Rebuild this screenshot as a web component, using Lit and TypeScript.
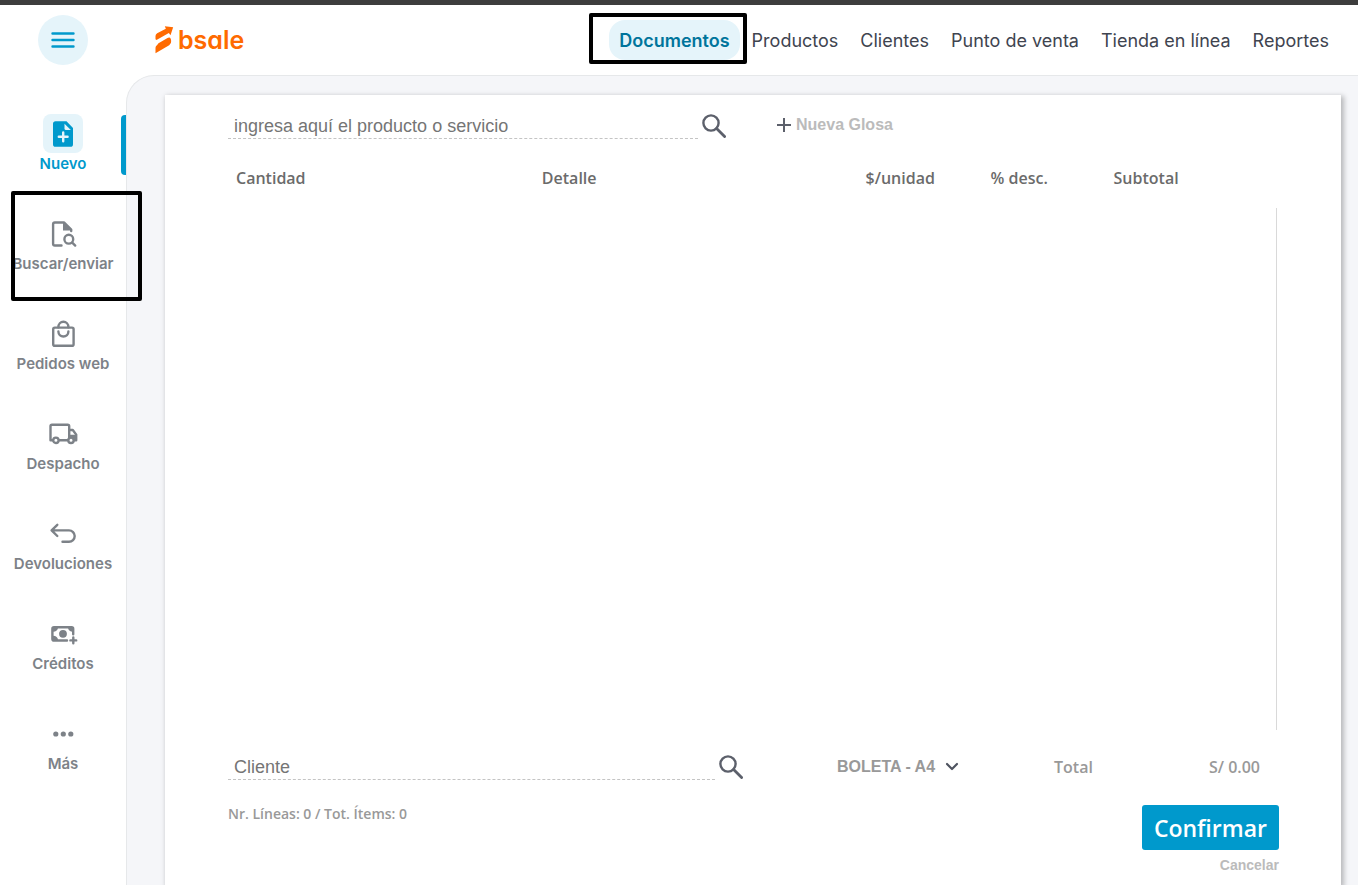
import { LitElement, html, css, svg, nothing } from "lit";
import { customElement, state } from "lit/decorators.js";

const icons: Record<string, unknown> = {
  nuevo: svg`
    <path fill="currentColor" d="M8 2.2h10.5L25 9v16.2a2.6 2.6 0 0 1-2.6 2.6H7.6A2.6 2.6 0 0 1 5 25.2V5a2.8 2.8 0 0 1 3-2.8z"/>
    <path class="cut" d="M16.5 4.8v4.7a1.500 1.500 0 0 0 1.500 1.500h4.800z"/>
    <path class="cut-line" d="M15.200 13.400v8.800M10.800 17.800h8.800"/>`,
  buscar: svg`
    <path class="line" d="M13.500 26.500H6.800a1.700 1.700 0 0 1-1.700-1.700V5.200a1.700 1.700 0 0 1 1.700-1.700h9.400l7 7v1.600"/>
    <path fill="currentColor" d="M15 3v8.500h8.600z"/>
    <circle class="line" cx="20.800" cy="20.200" r="4.400"/>
    <path class="line" d="M24.200 23.600l3 3"/>`,
  pedidos: svg`
    <rect class="line" x="5.200" y="8.600" width="20.400" height="18.200" rx="1.600"/>
    <path class="line" d="M10.400 8.200a5 5.400 0 0 1 10 0M10.400 12.500a5 5 0 0 0 10 0"/>`,
  despacho: svg`
    <path class="line" d="M4.400 21.200H2.500V7.200a1.500 1.500 0 0 1 1.500-1.500h15.700a1.500 1.500 0 0 1 1.500 1.500v13M11.500 21.200h8M21.200 11h3.600l3.400 4.600v5.600h-1.600"/>
    <path fill="currentColor" d="M21 15.800h8V21l-2 .5-4-3-2 .5z"/>
    <circle class="line hollow" cx="7.900" cy="21.300" r="2.700"/>
    <circle class="line hollow" cx="23" cy="21.300" r="2.700"/>`,
  devoluciones: svg`
    <path class="line" d="M9.300 5.800L3.600 11.400l5.700 5.600M4 11.400h17a5.700 5.700 0 0 1 0 11.400h-6.500"/>`,
  creditos: svg`
    <path class="line" d="M19 21.500H6a1.600 1.600 0 0 1-1.600-1.600V9.800A1.600 1.600 0 0 1 6 8.200h17.600a1.600 1.600 0 0 1 1.600 1.600v5.400"/>
    <path fill="currentColor" d="M5 8.500h5c0 2.600-2 4.200-5 4.200zM20 8.500h5v4.200c-3 0-5-1.600-5-4.200zM5 16.800c3 0 5 1.700 5 4.400H5z"/>
    <circle fill="currentColor" cx="15" cy="14.800" r="3.900"/>
    <path class="line" d="M25.300 18.500v5.800M22.400 21.400h5.800"/>`,
  mas: svg`
    <g fill="currentColor"><circle cx="7.800" cy="15" r="2.600"/><circle cx="15.300" cy="15" r="2.600"/><circle cx="22.800" cy="15" r="2.600"/></g>`,
};

const sideItems = [
  { id: "nuevo", label: "Nuevo" },
  { id: "buscar", label: "Buscar/enviar", marked: true },
  { id: "pedidos", label: "Pedidos web" },
  { id: "despacho", label: "Despacho" },
  { id: "devoluciones", label: "Devoluciones" },
  { id: "creditos", label: "Créditos" },
  { id: "mas", label: "Más" },
];

const sections = ["Documentos", "Productos", "Clientes", "Punto de venta", "Tienda en línea", "Reportes"];

const magnifier = html`<svg width="24" height="24" viewBox="0 0 24 24" aria-hidden="true">
  <circle cx="9" cy="9" r="7.600" fill="none" stroke="currentColor" stroke-width="2.400"/>
  <path d="M14.600 14.600l8 8" fill="none" stroke="currentColor" stroke-width="2.800" stroke-linecap="round"/>
</svg>`;

@customElement("app-root")
export class AppRoot extends LitElement {
  @state() private section = "Documentos";
  @state() private current = "nuevo";

  static styles = css`
    :host {
      display: flex;
      flex-direction: column;
      min-height: 100vh;
      background: #fff;
      font-family: Inter, sans-serif;
      color: #7d8288;
    }
    * { box-sizing: border-box; }
    svg { display: block; flex: none; }
    button, input, select { font: inherit; color: inherit; border: 0; background: none; padding: 0; margin: 0; cursor: pointer; }
    a { color: inherit; text-decoration: none; }

    .strip { height: 5px; background: #3d3d3d; }
    .header { display: flex; align-items: center; height: 70px; padding-right: 19px; }
    .menu-slot { width: 126px; display: flex; justify-content: center; flex: none; }
    .menu { width: 50px; height: 50px; border-radius: 50%; background: #e5f4fa; color: #0099cc; display: grid; place-items: center; }
    .brand { display: flex; align-items: center; gap: 4px; padding-left: 29px; color: #ff6a00; font-size: 25px; line-height: 28px; font-weight: 600; font-feature-settings: "cv11"; }
    .sections { display: flex; gap: 2px; margin-left: auto; font-size: 18px; line-height: 38px; color: #40444f; white-space: nowrap; }
    .section { display: block; padding: 2px 10px 0; border-radius: 16px; }
    .section.on { background: #e5f4fa; color: #00759c; font-weight: 600; }
    .marked { position: relative; }
    .frame { position: absolute; border: 4px solid #000; border-radius: 2px; pointer-events: none; z-index: 2; }
    .frame-section { inset: -7px -7px -4px -20px; }
    .frame-item { inset: -24px -16px -26px 11px; }

    .body { flex: 1; display: flex; }
    .side { width: 126px; flex: none; display: flex; flex-direction: column; gap: 40px; padding: 40px 0; }
    .item-wrap { position: relative; }
    .item-wrap.on { box-shadow: none; }
    .item-wrap.on::after { content: ""; position: absolute; top: 0; right: 0; width: 5px; height: 60px; background: #0099cc; border-radius: 4px 0 0 4px; }
    .item { display: flex; flex-direction: column; align-items: center; height: 60px; font-size: 15px; line-height: 22px; font-weight: 600; white-space: nowrap; }
    .item-icon { width: 40px; height: 40px; margin-top: -1px; border-radius: 8px; display: grid; place-items: center; }
    .item.on { color: #0099cc; }
    .item.on .item-icon { background: #e5f4fa; }
    .line { fill: none; stroke: currentColor; stroke-width: 2.4; stroke-linecap: round; stroke-linejoin: round; }
    .hollow { fill: #fff; }
    .cut { fill: #e5f4fa; }
    .cut-line { fill: none; stroke: #e5f4fa; stroke-width: 2.4; stroke-linecap: round; }

    .main { flex: 1; min-width: 0; display: flex; background: #f5f6f9; border: 1px solid #e6e8ea; border-width: 1px 0 0 1px; border-top-left-radius: 28px; padding: 19px 17px 0 38px; overflow: hidden; }
    .card { flex: 1; min-width: 0; display: flex; flex-direction: column; background: #fff; box-shadow: 2px 2px 5px 1px rgba(0, 0, 0, 0.25); padding: 18px 62px 12px 63px; font-family: "Open Sans", sans-serif; font-weight: 600; }

    .entry { display: grid; grid-template-columns: 498fr 503fr; gap: 50px; align-items: start; }
    .lookup { display: flex; gap: 4px; align-items: flex-start; color: #5c606b; }
    .lookup input { flex: 1; min-width: 0; height: 26px; border-bottom: 1px dashed #c4c4c4; padding: 2px 6px 0; font: 18px/22px "Liberation Sans", Arial, sans-serif; color: #555; outline: none; cursor: text; }
    .lookup input::placeholder { color: #757575; opacity: 1; }
    .lookup svg { margin-top: 1px; }
    .gloss { justify-self: start; display: flex; align-items: center; gap: 4px; font: bold 16px/24px "Liberation Sans", Arial, sans-serif; color: #bbb; }
    .gloss svg { color: #5c606b; }

    .lines { width: 100%; border-collapse: collapse; table-layout: fixed; margin-top: 25px; font-size: 16px; line-height: 28px; color: #6b6b6b; }
    .lines th { text-align: left; font-weight: 600; padding: 0 0 0 8px; white-space: nowrap; }
    .c1 { width: 29.1%; }
    .c2 { width: 30.8%; }
    .c3 { width: 11.9%; }
    .c4 { width: 11.7%; }
    .rows { flex: 1; min-height: 200px; margin: 16px 2px 24px 0; border-right: 1px solid #d9d9d9; }

    .summary { display: grid; grid-template-columns: 609fr 217fr 225fr; align-items: start; font-size: 16px; line-height: 26px; color: #999; }
    .summary .lookup { margin-right: 94px; }
    .kind { display: grid; justify-self: start; align-items: center; }
    .kind select, .kind svg { grid-area: 1 / 1; }
    .kind select { appearance: none; padding-right: 22px; font: bold 16px/26px "Liberation Sans", Arial, sans-serif; color: #999; }
    .kind svg { justify-self: end; color: #4f5460; pointer-events: none; }
    .total { display: flex; justify-content: space-between; padding-right: 19px; white-space: nowrap; }

    .foot { display: flex; justify-content: space-between; align-items: flex-start; margin-top: 25px; }
    .count { font-size: 14px; line-height: 18px; color: #999; }
    .actions { display: flex; flex-direction: column; align-items: flex-end; gap: 7px; }
    .confirm { height: 45px; padding: 0 12px; border-radius: 3px; background: #0099cc; color: #fff; font-size: 23px; font-weight: 600; }
    .cancel { font: bold 14px/16px "Liberation Sans", Arial, sans-serif; color: #bbb; }
  `;

  render() {
    return html`
      <div class="strip"></div>
      <header class="header">
        <div class="menu-slot">
          <button class="menu" aria-label="Menú">
            <svg width="24" height="16" viewBox="0 0 24 16" aria-hidden="true">
              <path d="M1.500 1.500h21M1.500 8h21M1.500 14.500h21" fill="none" stroke="currentColor" stroke-width="2.400" stroke-linecap="round"/>
            </svg>
          </button>
        </div>
        <a class="brand" href="#inicio">
          <svg width="19" height="28" viewBox="466 79 56 84" fill="currentColor" aria-hidden="true">
            <path d="M467 119V109Q467 104 472 101L498 87L495 80L520 83L512 107L507 100L470 121Z"/>
            <path d="M467 161V144Q467 139 472 136L476 131L503 115Q510 111 513 118L514 124Q515 132 508 137Z"/>
          </svg>
          <span>bsale</span>
        </a>
        <nav class="sections">
          ${sections.map((name) => html`
            <div class=${name === "Documentos" ? "marked" : ""}>
              <a class="section ${name === this.section ? "on" : ""}" href="#" @click=${(e: Event) => { e.preventDefault(); this.section = name; }}>${name}</a>
              ${name === "Documentos" ? html`<span class="frame frame-section"></span>` : nothing}
            </div>`)}
        </nav>
      </header>
      <div class="body">
        <nav class="side">
          ${sideItems.map((item) => html`
            <div class="item-wrap ${item.id === this.current ? "on" : ""}">
              <a class="item ${item.id === this.current ? "on" : ""}" href="#" @click=${(e: Event) => { e.preventDefault(); this.current = item.id; }}>
                <span class="item-icon"><svg width="30" height="30" viewBox="0 0 30 30" aria-hidden="true">${icons[item.id]}</svg></span>
                <span>${item.label}</span>
              </a>
              ${item.marked ? html`<span class="frame frame-item"></span>` : nothing}
            </div>`)}
        </nav>
        <main class="main">
          <section class="card">
            <div class="entry">
              <div class="lookup">
                <input type="text" aria-label="Producto o servicio" placeholder="ingresa aquí el producto o servicio">
                <button aria-label="Buscar producto">${magnifier}</button>
              </div>
              <button class="gloss">
                <svg width="16" height="16" viewBox="0 0 16 16" aria-hidden="true"><path d="M8 1v14M1 8h14" fill="none" stroke="currentColor" stroke-width="2"/></svg>
                Nueva Glosa
              </button>
            </div>
            <table class="lines">
              <thead>
                <tr>
                  <th class="c1" scope="col">Cantidad</th>
                  <th class="c2" scope="col">Detalle</th>
                  <th class="c3" scope="col">$/unidad</th>
                  <th class="c4" scope="col">% desc.</th>
                  <th scope="col">Subtotal</th>
                </tr>
              </thead>
            </table>
            <div class="rows"></div>
            <div class="summary">
              <div class="lookup">
                <input type="text" aria-label="Cliente" placeholder="Cliente">
                <button aria-label="Buscar cliente">${magnifier}</button>
              </div>
              <div class="kind">
                <select aria-label="Tipo de documento"><option>BOLETA - A4</option></select>
                <svg width="14" height="10" viewBox="0 0 14 10" aria-hidden="true"><path d="M2 2l5 5 5-5" fill="none" stroke="currentColor" stroke-width="2.200" stroke-linecap="round" stroke-linejoin="round"/></svg>
              </div>
              <div class="total"><span>Total</span><span>S/ 0.00</span></div>
            </div>
            <div class="foot">
              <span class="count">Nr. Líneas: 0 / Tot. Ítems: 0</span>
              <div class="actions">
                <button class="confirm">Confirmar</button>
                <button class="cancel">Cancelar</button>
              </div>
            </div>
          </section>
        </main>
      </div>
    `;
  }
}
